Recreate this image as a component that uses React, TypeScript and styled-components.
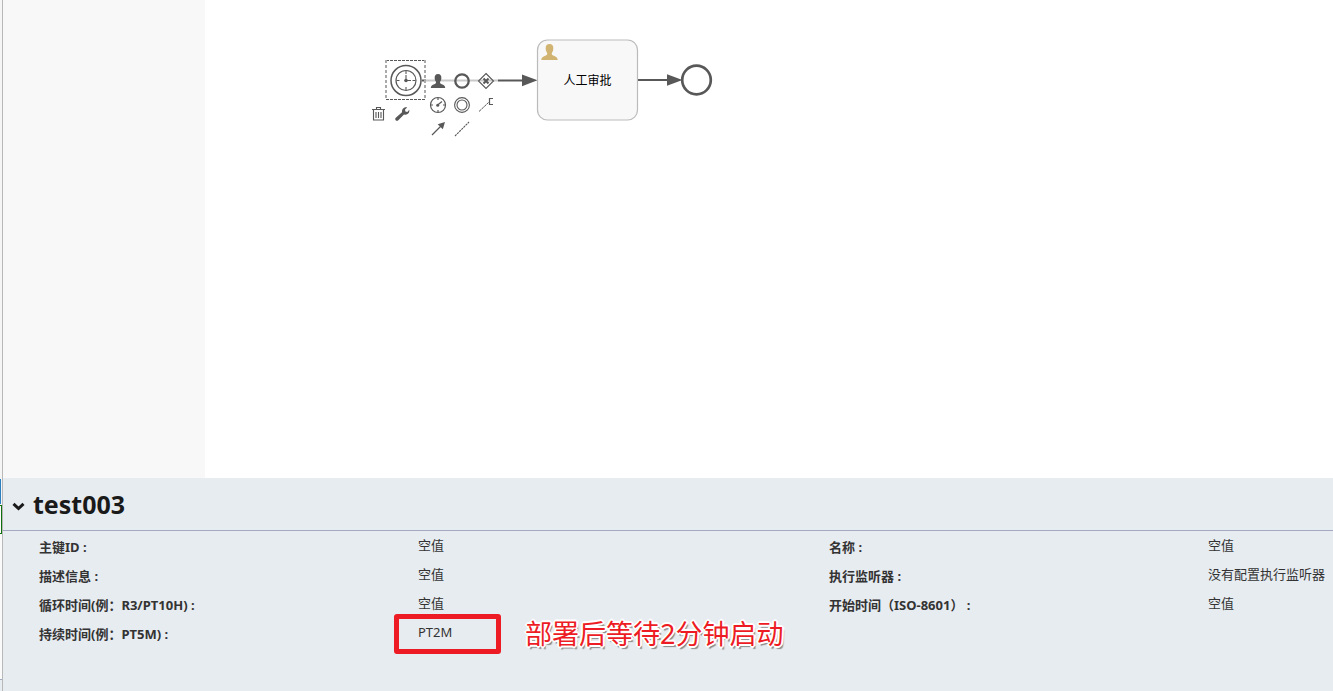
import React from "react";
import styled, { createGlobalStyle } from "styled-components";

const GlobalStyle = createGlobalStyle`
  * { box-sizing: border-box; }
  body {
    margin: 0;
    background: #fff;
    color: #333;
    font: 13px/20px "Noto Sans", "Noto Sans CJK SC", sans-serif;
    overflow-x: hidden;
  }
`;

const INK = "#585858";

const Page = styled.div`
  display: flex;
  min-height: 100vh;
`;

const Gutter = styled.aside`
  display: flex;
  flex-direction: column;
  justify-content: flex-end;
  flex: none;
  width: 3px;
  background: #f5f5f5;
  border-right: 1px solid #b8b8b8;
`;

const GutterTab = styled.div`
  height: 25px;
  background: #2a7fc0;
  width: 1px;
`;

const GutterField = styled.div`
  height: 29px;
  margin-top: 1px;
  border: 1px solid #107010;
  border-left: 0;
  background: #fff;
`;

const GutterBody = styled.div`
  height: 145px;
  background: #fafafa;
`;

const GutterFoot = styled.div`
  height: 12px;
  border-top: 1px solid #a3aabf;
  background: #e7ecf1;
`;

const Main = styled.main`
  display: flex;
  flex-direction: column;
  flex: 1;
  min-width: 0;
`;

const Editor = styled.section`
  display: flex;
  flex: 1;
  min-height: 160px;
`;

const Palette = styled.div`
  flex: none;
  width: 202px;
  background: #f8f8f8;
`;

const Canvas = styled.div`
  position: relative;
  flex: 1;
  overflow: hidden;
`;

const Diagram = styled.svg`
  display: block;
`;

const TaskLabel = styled.div`
  position: absolute;
  left: 332px;
  top: 41px;
  width: 101px;
  height: 80px;
  display: flex;
  align-items: center;
  justify-content: center;
  color: #000;
  font-size: 12px;
`;

const Pad = styled.div<{ $x: number; $y: number; $columns: number }>`
  position: absolute;
  left: ${(p) => p.$x}px;
  top: ${(p) => p.$y}px;
  display: grid;
  grid-template-columns: repeat(${(p) => p.$columns}, 24px);
  grid-auto-rows: 24px;
`;

const PadButton = styled.button`
  padding: 0;
  border: 0;
  background: transparent;
  cursor: pointer;
  svg { display: block; }
`;

const Panel = styled.section`
  min-height: 213px;
  background: #e7ecf1;
`;

const PanelHeader = styled.header`
  display: flex;
  align-items: center;
  height: 53px;
  padding-left: 9px;
  border-bottom: 1px solid #a3aabf;
`;

const Toggle = styled.button`
  display: flex;
  align-items: center;
  padding: 5px 0 0;
  border: 0;
  background: none;
  width: 21px;
  cursor: pointer;
`;

const Title = styled.h1`
  margin: 0;
  color: #1a1a1a;
  font-size: 25px;
  font-weight: 700;
  line-height: 36px;
`;

const Details = styled.dl`
  display: grid;
  grid-template-columns:
    minmax(0, 379fr) minmax(0, 411fr) minmax(0, 379fr) minmax(0, 125fr);
  grid-auto-rows: 29px;
  margin: 0;
  padding: 4px 0 0 36px;
  white-space: nowrap;
`;

const Term = styled.dt<{ $first?: boolean }>`
  padding-top: 2px;
  font-weight: 700;
  grid-column: ${(p) => (p.$first ? 1 : "auto")};
`;

const Value = styled.dd`
  position: relative;
  margin: 0;
`;

const Highlight = styled.span`
  position: absolute;
  left: -24px;
  top: -8px;
  width: 107px;
  height: 40px;
  border: 5px solid #ed1c24;
  border-radius: 3px;
`;

const Note = styled.strong`
  position: absolute;
  left: 107px;
  top: -8px;
  color: #ed1c24;
  font-size: 27px;
  font-weight: 400;
  line-height: 40px;
  text-shadow:
    -1px -1px 0 #fff, 1px -1px 0 #fff, -1px 1px 0 #fff, 1px 1px 0 #fff,
    -2px 0 0 #fff, 2px 0 0 #fff, 0 -2px 0 #fff, 0 2px 0 #fff,
    2px 3px 1px #888;
`;

const PERSON =
  "M8.2 0C5.400 0 4.200 2 4.400 4.600C4.500 6.600 5 8 5.900 9C6.100 10.600 5.600 11 4 11.700C1.600 12.600 0.200 13.200 0 16H16.400C16.200 13.200 14.800 12.600 12.400 11.700C10.800 11 10.300 10.600 10.500 9C11.400 8 11.900 6.600 12 4.600C12.200 2 11 0 8.200 0Z";

function Icon({ children }: { children: React.ReactNode }) {
  return (
    <svg width="24" height="24" viewBox="0 0 24 24" fill="none" stroke={INK} strokeWidth="1">
      {children}
    </svg>
  );
}

const appendActions = [
  {
    name: "追加任务",
    icon: <path d={PERSON} transform="translate(4.800 5) scale(.88 .87)" fill={INK} stroke="none" />,
  },
  { name: "追加结束事件", icon: <circle cx="12" cy="12" r="6.700" strokeWidth="2.300" /> },
  {
    name: "追加网关",
    icon: (
      <>
        <path d="M12 4.500 19.500 12 12 19.500 4.500 12Z" strokeWidth="1.100" />
        <path d="M9.500 9.500l5 5M14.500 9.500l-5 5" strokeWidth="2.100" />
      </>
    ),
  },
  {
    name: "追加中间事件",
    icon: (
      <>
        <circle cx="12" cy="12" r="7.500" strokeWidth="1.200" />
        <path d="M12 5v2M12 17v2M5 12h2M17 12h2M11 12.500l5-4" strokeWidth="1.200" />
        <circle cx="11.700" cy="12.300" r="1.500" fill={INK} stroke="none" />
      </>
    ),
  },
  {
    name: "追加边界事件",
    icon: (
      <>
        <circle cx="12" cy="12" r="7.400" strokeWidth="1.100" />
        <circle cx="12" cy="12" r="5" strokeWidth="1.100" />
      </>
    ),
  },
  {
    name: "追加文本注释",
    icon: (
      <>
        <path d="M5 18.500l9.500-9" strokeDasharray="3 .6" />
        <path d="M19 5.500h-3.500v6H19" strokeWidth="1.200" />
      </>
    ),
  },
  {
    name: "连接",
    icon: (
      <>
        <path d="M6 18L16 8" strokeWidth="1.300" />
        <path d="M19 5l-2.200 7.300-5.100-5.100Z" fill={INK} stroke="none" />
      </>
    ),
  },
  { name: "关联", icon: <path d="M5 19L19 5" strokeWidth="1.100" strokeDasharray="2.200 .8" /> },
];

const editActions = [
  {
    name: "删除",
    icon: (
      <>
        <path d="M6 7.500h13M10.500 7V5.500h4V7M7.500 8v10h10V8" strokeWidth="1.100" />
        <path d="M10 10v6M12.500 10v6M15 10v6" strokeWidth="1.100" />
      </>
    ),
  },
  {
    name: "更改类型",
    icon: (
      <path
        fill={INK}
        stroke="none"
        d="M17.200 5.400L15 7.600 15.400 9.600 17.300 10 19.300 7.800C19.700 10 18.700 12 16.600 12.600C15.700 12.900 14.900 12.700 14 12.500L8.300 18.200C7.400 19 6.300 18.900 5.700 18.200C5 17.500 5.100 16.500 5.800 15.800L12 10.300C11.700 8 12.800 6.200 14.600 5.500C15.500 5.200 16.400 5.200 17.200 5.400Z"
      />
    ),
  },
];

const fields: [string, string][] = [
  ["主键ID :", "空值"],
  ["名称 :", "空值"],
  ["描述信息 :", "空值"],
  ["执行监听器 :", "没有配置执行监听器"],
  ["循环时间(例：R3/PT10H) :", "空值"],
  ["开始时间（ISO-8601） :", "空值"],
];

function ProcessDiagram() {
  return (
    <Diagram width="520" height="150" viewBox="0 0 520 150" fill="none" stroke={INK}>
      <path d="M217 80.500H221" strokeWidth="2" />
      <path d="M221 80.500H293" strokeWidth="2" stroke="#c9c9c9" />
      <path d="M293 80.500H320M433 80H464" strokeWidth="2" />
      <path d="M317 74.500L332.500 80.300 317 86.200ZM462 74.300L477.500 80 462 85.800Z" fill={INK} stroke="none" />

      <path d="M181 60.500H220.500M181 99.500H220.500" strokeDasharray="3 1" />
      <path d="M181 60V100M220 60V100" stroke="#aaa" strokeWidth="2" strokeDasharray="3 2" />
      <circle cx="201" cy="80.500" r="15" strokeWidth="1.500" fill="#fff" />
      <circle cx="201" cy="80.500" r="10" strokeWidth="1.200" />
      <path d="M201 71v3M201 87v3M191.500 80.500h3M207.500 80.500h3M201 80.500V75M201 80.500h5" strokeWidth="1.100" />
      <circle cx="201" cy="80.500" r="1.800" fill={INK} stroke="none" />

      <rect x="332.500" y="40" width="100" height="80" rx="10" fill="#f8f8f8" stroke="#bbb" strokeWidth="1.200" />
      <path d={PERSON} transform="translate(336.300 44)" fill="#d2b472" stroke="none" />
      <circle cx="491.500" cy="80" r="14.300" strokeWidth="2.700" />
    </Diagram>
  );
}

export default function App() {
  return (
    <>
      <GlobalStyle />
      <Page>
        <Gutter>
          <GutterTab />
          <GutterField />
          <GutterBody />
          <GutterFoot />
        </Gutter>
        <Main>
          <Editor>
            <Palette />
            <Canvas>
              <ProcessDiagram />
              <TaskLabel>人工审批</TaskLabel>
              <Pad $x={221} $y={69} $columns={3}>
                {appendActions.map((a) => (
                  <PadButton key={a.name} type="button" aria-label={a.name}>
                    <Icon>{a.icon}</Icon>
                  </PadButton>
                ))}
              </Pad>
              <Pad $x={161} $y={102} $columns={2}>
                {editActions.map((a) => (
                  <PadButton key={a.name} type="button" aria-label={a.name}>
                    <Icon>{a.icon}</Icon>
                  </PadButton>
                ))}
              </Pad>
            </Canvas>
          </Editor>
          <Panel>
            <PanelHeader>
              <Toggle type="button" aria-label="折叠">
                <svg width="13" height="10" viewBox="0 0 13 10" fill="none" stroke="#1a1a1a" strokeWidth="3">
                  <path d="M1.500 1.800L6.500 6.500 11.500 1.800" />
                </svg>
              </Toggle>
              <Title>test003</Title>
            </PanelHeader>
            <Details>
              {fields.map(([label, value], i) => (
                <React.Fragment key={label}>
                  <Term $first={i % 2 === 0}>{label}</Term>
                  <Value>{value}</Value>
                </React.Fragment>
              ))}
              <Term $first>持续时间(例：PT5M) :</Term>
              <Value>
                PT2M
                <Highlight />
                <Note>部署后等待2分钟启动</Note>
              </Value>
            </Details>
          </Panel>
        </Main>
      </Page>
    </>
  );
}
